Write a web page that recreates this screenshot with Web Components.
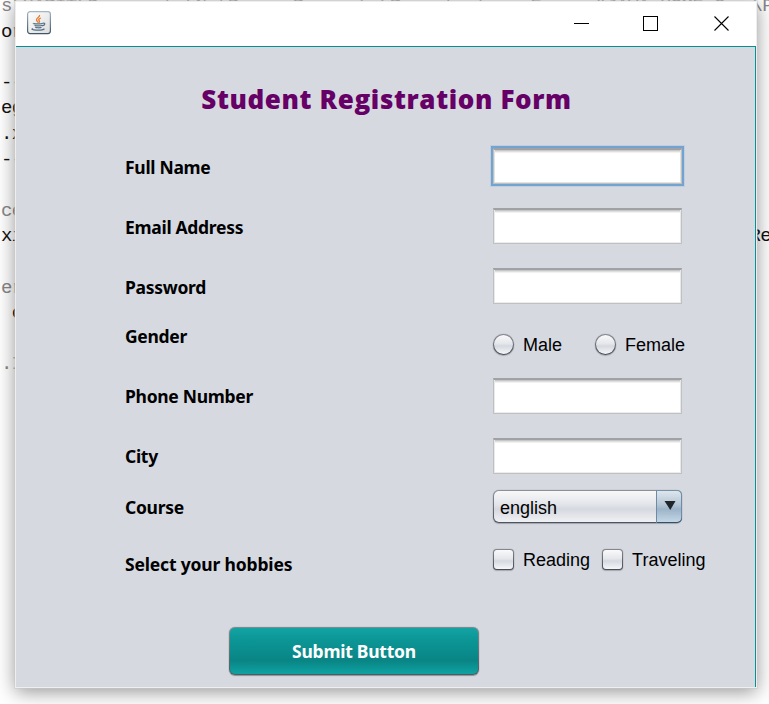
<!DOCTYPE html>
<html lang="en"><head><meta charset="utf-8"><title>Student Registration Form</title>
<style>
html,body{margin:0;width:769px;height:704px;overflow:hidden;background:#fff}
</style></head><body>
<registration-desktop></registration-desktop>
<script>
const define=(name,html)=>customElements.define(name,class extends HTMLElement{
  constructor(){super();this.attachShadow({mode:'open'}).innerHTML=html;}
});

/* Editor output lying behind the window */
define('editor-backdrop',`<style>
:host{display:block;position:absolute;inset:0;overflow:hidden;font:19px/25.6px "Liberation Mono",monospace;letter-spacing:-.6px;color:#111;background:#fff}
pre{margin:0;font:inherit;padding:0 0 0 1px;position:relative;top:-6px}
.g{color:#888}
pre div{height:25.6px;white-space:pre}
.row{display:flex;justify-content:space-between;width:768px}
</style><pre><div class="g row"><span>s\\HARIT\\Documents\\NetBeans Projects\\Registration_Form; "JAVA_HOME=C</span><span style="margin-right:-4px">\\P</span></div><div>or</div><div></div><div>--</div><div>eg</div><div>.x</div><div>--</div><div></div><div class="g">ce</div><div class="row"><span>xi</span><span style="margin-right:-2px">Re</span></div><div></div><div class="g">er</div><div> c</div><div></div><div class="g">.I</div></pre>`);

/* Title bar with the Java cup and caption buttons */
define('title-bar',`<style>
:host{display:flex;height:44px;background:#fff;justify-content:space-between;box-sizing:border-box;padding:9px 26px 0 11px}
svg{display:block}
.caps{display:flex;gap:54px;padding-top:5px}
</style>
<svg width="24" height="24" viewBox="0 0 24 24"><defs><linearGradient id="b" x2="0" y2="1"><stop stop-color="#a3b6c4"/><stop offset="1" stop-color="#3f5568"/></linearGradient><linearGradient id="f" x2="1" y2="1"><stop stop-color="#fff"/><stop offset="1" stop-color="#dcdcdc"/></linearGradient></defs>
<rect x=".6" y=".6" width="22.8" height="22" rx="2.5" fill="url(#f)" stroke="url(#b)" stroke-width="1.2"/>
<path d="M12.500 4c1 2-3.500 2.800-3 5 .2 1 1.500 1.600 1.200 2.600M14 7c-2 .8-3 1.600-1.800 2.800.6.600.2 1.300-.6 1.900" fill="none" stroke="#e9792b" stroke-width="1.300"/>
<path d="M6.500 12.200c-1.500.8 8 1.200 9.300-.1M7.500 14.200c1 1 6 1 8 .1M8.300 16c1 1 5 1 6.200.2M16 12.300c2.600-.8 2.300 2-.8 2.600M6 17.500c-4.800 1.700 9 2.500 11.500.2" fill="none" stroke="#527089" stroke-width="1.200"/></svg>
<div class="caps">
<svg width="15" height="16" viewBox="0 0 15 16" shape-rendering="crispEdges"><path d="M0 7.500h15" stroke="#000"/></svg>
<svg width="17" height="16" viewBox="0 0 17 16" shape-rendering="crispEdges"><path d="M.5 .5h14v14h-14z" stroke="#000" fill="none"/></svg>
<svg width="16" height="16" viewBox="0 0 16 16"><path d="M.5 .5l14 14M14.500 .5l-14 14" stroke="#000" stroke-width="1.100"/></svg>
</div>`);

define('form-label',`<style>
:host{display:block;width:368px;flex:none;font:bold 17.500px/24px "Noto Sans","Open Sans",sans-serif;letter-spacing:-.3px;color:#000;white-space:nowrap}
</style><slot></slot>`);

define('form-row',`<style>:host{display:flex;align-items:flex-start}</style><slot></slot>`);

define('text-field',`<style>
:host{display:block;box-sizing:border-box;width:189px;height:36px;border:1px solid #bfc0c2;border-top:2px solid #9fa1a4;background:linear-gradient(#c6c7c8 0 1px,#dedede 1px 2px,#f2f2f2 2px 3px,#fff 3px);box-shadow:inset 1px 0 #e9e9e9,inset -1px 0 #e9e9e9,inset 0 -1px #ececec}
:host([focused]){box-shadow:0 0 0 2px #73a4d1,0 0 0 3px #a9c3df80,inset 1px 0 #e3e3df,inset -1px 0 #e3e3df,inset 0 -1px #e3e3df}
</style>`);

define('choice-option',`<style>
:host{display:flex;align-items:center;gap:9px;height:22px;font:18px/22px "Liberation Sans",Arial,sans-serif;color:#000;white-space:nowrap}
i{display:block;box-sizing:border-box;width:21px;height:21px;border:1.500px solid transparent;border-radius:4px;background:linear-gradient(#fafafb,#e5e7eb 45%,#d5d9e0 58%,#f5f6f8) padding-box,linear-gradient(#85878d,#484b54) border-box;box-shadow:0 0 1px #81858e,0 1px 1px #a9adb5}
:host([round]) i{border-radius:50%}
span{position:relative;top:1px}
</style><i></i><span><slot></slot></span>`);

define('combo-box',`<style>
:host{display:flex;box-sizing:border-box;width:189px;height:33px;border:1.500px solid transparent;border-radius:6px;background:linear-gradient(#f8f8fa,#e2e4e9 45%,#d5d8df 58%,#f0f1f4) padding-box,linear-gradient(#8e9096,#4d525d) border-box;box-shadow:0 0 1px #81858e,0 1px 1px #a5a9b2;font:18px/34px "Liberation Sans",Arial,sans-serif;color:#000}
span{flex:1;padding-left:6px}
b{display:flex;justify-content:center;padding-top:9px;box-sizing:border-box;width:26px;margin:-1px -1px -1px 0;border-left:1px solid #6d8ba6;background:linear-gradient(#e0e8ef,#b5c6d5 45%,#9cb4c8 58%,#c7d9e8);box-shadow:inset 0 1px #7690a6,inset 0 -1px #33506b,inset -1px 0 #6d8ba6;border-radius:0 5px 5px 0}
</style><span><slot></slot></span><b><svg width="12" height="12" viewBox="0 0 12 12"><path d="M.5 2h11L6.300 11z" fill="#20252a"/></svg></b>`);

define('submit-button',`<style>
:host{display:flex;box-sizing:border-box;width:250px;height:48px;justify-content:center;align-items:center;border:1.500px solid transparent;border-radius:6px;background:linear-gradient(#13a3a3,#0c9696 25%,#0a8989 60%,#0a8484 70%,#0ea2a2) padding-box,linear-gradient(#7c8c90,#4c5c60) border-box;box-shadow:0 0 1px #72858a,0 1px 1px #8f9499;color:#fff;font:bold 17.500px/24px "Noto Sans","Open Sans",sans-serif;letter-spacing:-.25px}
</style><span><slot></slot></span>`);

define('registration-form',`<style>
:host{display:block;box-sizing:border-box;height:641px;border:solid #009294;border-width:1px 1px 0 0;background:#d6d9e0;padding:32px 0 0 109px}
h1{margin:0 0 0 -107px;text-align:center;font:800 26px/40px "Open Sans","Noto Sans",sans-serif;letter-spacing:.62px;color:#606;height:69px}
.a{height:60px}.b{height:50px}
form-label{padding-top:6px}
.first{padding-top:7px}
.opt{display:flex;gap:33px}
</style>
<h1>Student Registration Form</h1>
<form-row class="a"><form-label class="first">Full Name</form-label><text-field focused></text-field></form-row>
<form-row class="a"><form-label class="first">Email Address</form-label><text-field></text-field></form-row>
<form-row class="a"><form-label class="first">Password</form-label><text-field></text-field></form-row>
<form-row class="b"><form-label style="padding-top:0;margin-top:-4px">Gender</form-label><div class="opt" style="padding-top:5px"><choice-option round>Male</choice-option><choice-option round>Female</choice-option></div></form-row>
<form-row class="a"><form-label>Phone Number</form-label><text-field></text-field></form-row>
<form-row style="height:52px"><form-label>City</form-label><text-field></text-field></form-row>
<form-row style="height:58px"><form-label style="padding-top:5px">Course</form-label><combo-box>english</combo-box></form-row>
<form-row style="height:79px"><form-label style="padding-top:4px;letter-spacing:-.17px">Select your hobbies</form-label><div class="opt" style="gap:12px"><choice-option>Reading</choice-option><choice-option>Traveling</choice-option></div></form-row>
<submit-button style="margin-left:104px">Submit Button</submit-button>`);

define('app-window',`<style>
:host{display:block;position:absolute;left:16px;top:2px;width:740px;height:685px;box-shadow:0 0 0 1px #eee,0 0 0 1.500px #c8c8c8,0 4px 18px 1px #0000006b}
</style><slot></slot>`);

define('registration-desktop',`<style>:host{display:block;position:relative;width:769px;height:704px;overflow:hidden}</style>
<editor-backdrop></editor-backdrop>
<app-window><title-bar></title-bar><registration-form></registration-form></app-window>`);
</script></body></html>
